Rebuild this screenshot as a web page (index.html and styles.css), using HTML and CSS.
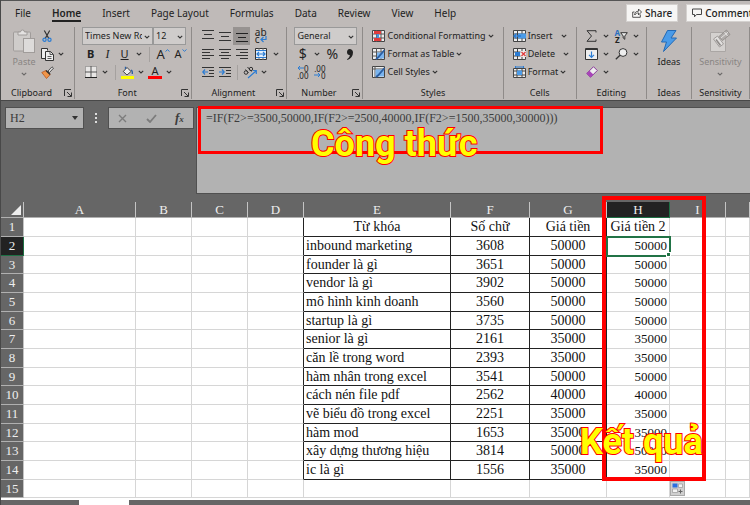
FILE: index.html
```
<!DOCTYPE html>
<html lang="vi">
<head>
<meta charset="utf-8">
<title>Excel</title>
<link rel="stylesheet" href="styles.css">
</head>
<body>
<svg class="defs" aria-hidden="true">
  <symbol id="chev" viewBox="0 0 6 4"><path d="M.8.8 3 3 5.200.8" fill="none" stroke="#333" stroke-width="1.1"/></symbol>
  <symbol id="launch" viewBox="0 0 8 8"><path d="M.5 7V.5H7M3 3l4 4M7.500 3.500v4h-4" fill="none" stroke="#333"/></symbol>
</svg>
<div class="app">
<header class="ribbon">
  <div class="topline">
    <nav class="tabs">
      <a href="#">File</a><a href="#" class="current">Home</a><a href="#">Insert</a><a href="#">Page Layout</a><a href="#">Formulas</a><a href="#">Data</a><a href="#">Review</a><a href="#">View</a><a href="#">Help</a>
    </nav>
    <div class="actions">
      <button class="action"><svg width="10" height="10" viewBox="0 0 10 10" fill="none" stroke="#444"><path d="M2.500 4H.7v5.300h7.600V6.500M2.700 7c0-2.500 1.300-3.800 3.800-3.800V1l3 3-3 3V4.900C5 4.900 3.700 5.500 2.700 7z" stroke-width=".9"/></svg>Share</button>
      <button class="action"><svg width="10" height="10" viewBox="0 0 10 10" fill="none" stroke="#444"><path d="M.5 1h9v5.500H4.500L2.500 8.800V6.500h-2z"/></svg>Comments</button>
    </div>
  </div>
  <div class="groups">
    <section class="group">
      <div class="body clip">
        <button class="tall off"><svg width="24" height="24" viewBox="0 0 24 24"><rect x="1.500" y="3" width="17" height="19" rx="1" fill="#cfccca" stroke="#a09c9a"/><path d="M6 6V3h2.500a2 2 0 0 1 4 0H15v3z" fill="#e4e2e1" stroke="#a09c9a"/><rect x="11.500" y="9.500" width="11" height="14" fill="#dddbda" stroke="#a09c9a"/></svg><span>Paste</span><svg class="chev" width="6" height="4"><use href="#chev"/></svg></button>
        <div class="stack">
          <div class="row"><button class="ic w14" aria-label="Cut"><svg width="10" height="12" viewBox="0 0 10 12" fill="none"><path d="M2.300.5 6.800 8.500M7.700.5 3.200 8.500" stroke="#333" stroke-width="1.200"/><circle cx="2.500" cy="9.800" r="1.600" stroke="#2b7cd3" stroke-width="1.200"/><circle cx="7.500" cy="9.800" r="1.600" stroke="#2b7cd3" stroke-width="1.200"/></svg></button></div>
          <div class="row"><button class="ic w14" aria-label="Copy"><svg width="13" height="13" viewBox="0 0 13 13" fill="#eee" stroke="#333"><path d="M4.500 10.500h-4V.5h6v2"/><path d="M4.500 3.500h5l3 3v6h-8z"/><path d="M9 3.500v3h3M6.500 8.500h4M6.500 10.500h4" fill="none" stroke-width=".8"/></svg></button><button class="ic w14" aria-label="Copy options"><svg class="chev" width="6" height="4"><use href="#chev"/></svg></button></div>
          <div class="row"><button class="ic w14" aria-label="Format painter"><svg width="13" height="13" viewBox="0 0 13 13"><path d="M7 5l4-4.200 1.500 1.400L8.500 6.500z" fill="#ddd" stroke="#333" stroke-width=".8"/><path d="M.8 6.500 5 4.500l4.200 4-3.700 4C4 10.500 2.500 8.500.8 6.500z" fill="#f0964a" stroke="#b9541b" stroke-width=".8"/><path d="M5 4.500l4.200 4" stroke="#333" stroke-width="1.500"/></svg></button></div>
        </div>
      </div>
      <div class="caption"><span>Clipboard</span><button class="launch" aria-label="Clipboard settings"><svg width="8" height="8"><use href="#launch"/></svg></button></div>
    </section>
    <section class="group">
      <div class="body font">
        <div class="row">
          <label class="pick name"><select aria-label="Font name"><option>Times New Roman</option></select><svg class="chev" width="6" height="4"><use href="#chev"/></svg></label>
          <label class="pick size"><select aria-label="Font size"><option>12</option></select><svg class="chev" width="6" height="4"><use href="#chev"/></svg></label>
        </div>
        <div class="row">
          <button class="ic w17 bold">B</button><button class="ic w17 italic">I</button><button class="ic w17 under">U</button><button class="ic w12" aria-label="Underline options"><svg class="chev" width="6" height="4"><use href="#chev"/></svg></button><i class="bar"></i>
          <button class="ic w18 grow">A<svg width="5" height="3" viewBox="0 0 5 3"><path d="M.5 2.500 2.500.7l2 1.800" fill="none" stroke="#2b7cd3"/></svg></button><button class="ic w17 shrink">A<svg width="5" height="3" viewBox="0 0 5 3"><path d="M.5.500 2.500 2.300l2-1.800" fill="none" stroke="#2b7cd3"/></svg></button>
        </div>
        <div class="row">
          <button class="ic w17" aria-label="Borders"><svg width="12" height="12" viewBox="0 0 12 12"><path d="M.5.5h11v11H.5z" fill="#e8e6e5" stroke="#777" stroke-dasharray="1 1"/><path d="M6 0v11M0 6h12" stroke="#555"/><path d="M0 11.500h12" stroke="#222"/></svg></button><button class="ic w12" aria-label="Border options"><svg class="chev" width="6" height="4"><use href="#chev"/></svg></button><i class="bar"></i>
          <button class="ic w14" aria-label="Fill colour"><svg width="13" height="13" viewBox="0 0 13 13"><path d="M6 1.500 10 5.500 6 9 2.300 5.500z" fill="#eee" stroke="#333" stroke-width=".9"/><path d="M4.500 3V.8M10 4c1.500.5 1.500 2.500 1.300 4" fill="none" stroke="#2b5fa3" stroke-width="1.300"/><path d="M0 10h13v3H0z" fill="#ff0"/></svg></button><button class="ic w14" aria-label="Fill options"><svg class="chev" width="6" height="4"><use href="#chev"/></svg></button>
          <button class="ic w14 ink">A</button><button class="ic w14" aria-label="Font colour options"><svg class="chev" width="6" height="4"><use href="#chev"/></svg></button>
        </div>
      </div>
      <div class="caption"><span>Font</span><button class="launch" aria-label="Font settings"><svg width="8" height="8"><use href="#launch"/></svg></button></div>
    </section>
    <section class="group">
      <div class="body align">
        <div class="row">
          <button class="ic w17" aria-label="Top align"><svg width="12" height="12" viewBox="0 0 12 12"><path d="M0 .500h12M2 4.500h8M0 8.500h12" stroke="#333"/></svg></button><button class="ic w17" aria-label="Middle align"><svg width="12" height="12" viewBox="0 0 12 12"><path d="M0 2.500h12M2 6.500h8M0 10.500h12" stroke="#333"/></svg></button><button class="ic w17 pressed" aria-label="Bottom align"><svg width="12" height="12" viewBox="0 0 12 12"><path d="M0 3.500h12M2 7.500h8M0 11.500h12" stroke="#222"/></svg></button>
          <button class="ic w21 wrap"><span>ab</span><span>c<svg width="7" height="7" viewBox="0 0 7 7"><path d="M6 0v3.500H1M3.500 1 1 3.500 3.500 6" fill="none" stroke="#2b7cd3" stroke-width="1.200"/></svg></span></button>
        </div>
        <div class="row">
          <button class="ic w17" aria-label="Align left"><svg width="12" height="12" viewBox="0 0 12 12"><path d="M0 1.500h12M0 4.500h8M0 7.500h12M0 10.500h8" stroke="#333"/></svg></button><button class="ic w17" aria-label="Centre"><svg width="12" height="12" viewBox="0 0 12 12"><path d="M0 1.500h12M2 4.500h8M0 7.500h12M2 10.500h8" stroke="#333"/></svg></button><button class="ic w17" aria-label="Align right"><svg width="12" height="12" viewBox="0 0 12 12"><path d="M0 1.500h12M4 4.500h8M0 7.500h12M4 10.500h8" stroke="#333"/></svg></button>
          <button class="ic w21" aria-label="Merge"><svg width="12" height="12" viewBox="0 0 12 12"><path d="M.5.5h11v11H.5z" fill="#eee" stroke="#333"/><path d="M4 0v12M8 0v12" stroke="#666"/><path d="M1 3h10v6H1z" fill="#e4f0fd"/><path d="M1 2.500h10M1 9.500h10" stroke="#2b7cd3" stroke-width="1.200"/><path d="M2 6h8M4 4 2 6l2 2M8 4l2 2-2 2" fill="none" stroke="#2b7cd3" stroke-width="1.200"/></svg></button><button class="ic w9" aria-label="Merge options"><svg class="chev" width="6" height="4"><use href="#chev"/></svg></button>
        </div>
        <div class="row">
          <button class="ic w17" aria-label="Decrease indent"><svg width="12" height="12" viewBox="0 0 12 12" fill="none"><path d="M0 1.500h12M7 4.500h5M7 7.500h5M0 10.500h12" stroke="#333"/><path d="M6 6H.8M3 3.500.8 6 3 8.500" stroke="#2b7cd3" stroke-width="1.200"/></svg></button><button class="ic w17" aria-label="Increase indent"><svg width="12" height="12" viewBox="0 0 12 12" fill="none"><path d="M0 1.500h12M7 4.500h5M7 7.500h5M0 10.500h12" stroke="#333"/><path d="M0 6h5.200M3 3.500 5.200 6 3 8.500" stroke="#2b7cd3" stroke-width="1.200"/></svg></button><i class="bar"></i>
          <button class="ic w17" aria-label="Orientation"><svg width="15" height="13" viewBox="0 0 15 13" fill="none"><g stroke="#333" stroke-width="1"><circle cx="3" cy="6.500" r="1.800"/><path d="M2.500 3.500l3 3.500M4.500 1l4 4.500"/><circle cx="8" cy="3" r="1.700"/></g><path d="M5 12l8-7M10 4.500h3.300V8" stroke="#2b7cd3" stroke-width="1.200"/></svg></button><button class="ic w9" aria-label="Orientation options"><svg class="chev" width="6" height="4"><use href="#chev"/></svg></button>
        </div>
      </div>
      <div class="caption"><span>Alignment</span><button class="launch" aria-label="Alignment settings"><svg width="8" height="8"><use href="#launch"/></svg></button></div>
    </section>
    <section class="group">
      <div class="body num">
        <div class="row"><label class="pick format"><select aria-label="Number format"><option>General</option></select><svg class="chev" width="6" height="4"><use href="#chev"/></svg></label></div>
        <div class="row"><button class="ic w17 sign">$</button><button class="ic w12" aria-label="Currency options"><svg class="chev" width="6" height="4"><use href="#chev"/></svg></button><button class="ic w18 sign">%</button><button class="ic w17" aria-label="Comma style"><svg width="8" height="11" viewBox="0 0 8 11"><path d="M3.500 0C5.500 0 7 1.300 7 3.500 7 7 5 9.500 1.500 11L1 10.300C3 9 3.800 7.500 3.800 6 2 6.200 1 4.800 1 3.200 1 1.300 2 0 3.500 0z" fill="#222"/></svg></button></div>
        <div class="row"><button class="ic w17 dec"><span><svg width="7" height="6" viewBox="0 0 7 6"><path d="M7 3H1M3 1 1 3l2 2" fill="none" stroke="#2b7cd3"/></svg>0</span><span>.00</span></button><button class="ic w17 dec"><span>.00</span><span><svg width="7" height="6" viewBox="0 0 7 6"><path d="M0 3h6M4 1l2 2-2 2" fill="none" stroke="#2b7cd3"/></svg>0</span></button></div>
      </div>
      <div class="caption"><span>Number</span><button class="launch" aria-label="Number settings"><svg width="8" height="8"><use href="#launch"/></svg></button></div>
    </section>
    <section class="group">
      <div class="body styles">
        <button class="row item"><svg width="13" height="12" viewBox="0 0 13 12"><path d="M.5.5h12v11H.5z" fill="#eee" stroke="#444"/><path d="M0 4h13M0 8h13M4.500 0v12M9 0v12" stroke="#555"/><path d="M2 1h7v3H2zM2 8h7v3H2z" fill="#e03c3c"/><path d="M4.500 4H7v4H4.500z" fill="#4a90d9"/></svg>Conditional Formatting<svg class="chev" width="6" height="4"><use href="#chev"/></svg></button>
        <button class="row item"><svg width="13" height="12" viewBox="0 0 13 12"><path d="M.5.5h12v11H.5z" fill="#eee" stroke="#444"/><path d="M0 4h13M0 8h13M4.500 0v12M9 0v12" stroke="#555"/><path d="M5 4.500h7v6H5z" fill="#7ab4ee"/><path d="M12.500 2 6 9.500 4 11" stroke="#2b5fa3" stroke-width="1.800"/></svg>Format as Table<svg class="chev" width="6" height="4"><use href="#chev"/></svg></button>
        <button class="row item"><svg width="13" height="12" viewBox="0 0 13 12"><path d="M.5.5h12v11H.5z" fill="#eee" stroke="#444"/><path d="M0 3h13M3 0v12" stroke="#555"/><path d="M3.500 3.500h8.500v7H3.500z" fill="#7ab4ee"/><path d="M12.500 2 6 9.500 4 11" stroke="#2b5fa3" stroke-width="1.800"/></svg>Cell Styles<svg class="chev" width="6" height="4"><use href="#chev"/></svg></button>
      </div>
      <div class="caption"><span>Styles</span></div>
    </section>
    <section class="group">
      <div class="body cells">
        <button class="row item wide"><svg width="13" height="12" viewBox="0 0 13 12"><path d="M.5.5h12v11H.5z" fill="#eee" stroke="#444"/><path d="M0 4h13M0 8h13M4.500 0v12M9 0v12" stroke="#444"/><path d="M5 3.500h8v5H5z" fill="#4a9be8"/><path d="M8 6H1M3.500 3.500 1 6l2.500 2.500" fill="none" stroke="#2b7cd3" stroke-width="1.300"/></svg>Insert<svg class="chev" width="6" height="4"><use href="#chev"/></svg></button>
        <button class="row item wide"><svg width="13" height="12" viewBox="0 0 13 12"><path d="M.5.5h12v11H.5z" fill="#eee" stroke="#444"/><path d="M0 4h13M0 8h13M4.500 0v12M9 0v12" stroke="#444"/><path d="M2 4h5v4H2z" fill="#2b7cd3"/><path d="M7.500 3h5.500v6H7.500z" fill="#eee"/><path d="M8.500 4l4 4M12.500 4l-4 4" stroke="#e03c3c" stroke-width="1.300"/></svg>Delete<svg class="chev" width="6" height="4"><use href="#chev"/></svg></button>
        <button class="row item"><svg width="13" height="12" viewBox="0 0 13 12"><path d="M.5 2.500h12v9H.5z" fill="#eee" stroke="#444"/><path d="M0 5h13M0 9h13M4 2v10M9 2v10" stroke="#444"/><path d="M4 4.500h5v4.500H4z" fill="#4a9be8"/><path d="M2.500 1h8M2.500 0v2M10.500 0v2" stroke="#2b7cd3"/></svg>Format<svg class="chev" width="6" height="4"><use href="#chev"/></svg></button>
      </div>
      <div class="caption"><span>Cells</span></div>
    </section>
    <section class="group">
      <div class="body edit">
        <div class="row"><button class="ic w14" aria-label="Sum"><svg width="11" height="12" viewBox="0 0 11 12"><path d="M10 2.500V.7H1L5.500 6 1 11.300h9V9.500" fill="none" stroke="#333"/></svg></button><button class="ic w14" aria-label="Sum options"><svg class="chev" width="6" height="4"><use href="#chev"/></svg></button><button class="ic w17 sort"><span><b>A</b><b>Z</b></span><svg width="8" height="8" viewBox="0 0 8 8"><path d="M.7.7h6.600L4.800 4v3.300L3.200 6V4z" fill="#eee" stroke="#333"/></svg></button><button class="ic w12" aria-label="Sort options"><svg class="chev" width="6" height="4"><use href="#chev"/></svg></button></div>
        <div class="row"><button class="ic w14" aria-label="Fill"><svg width="13" height="12" viewBox="0 0 13 12"><path d="M.5.5h12v11H.5z" fill="#eee" stroke="#333"/><path d="M0 1.500h13" stroke="#333"/><path d="M6.500 3.500V9M4 6.800l2.500 2.500L9 6.800" fill="none" stroke="#2b7cd3" stroke-width="1.200"/></svg></button><button class="ic w14" aria-label="Fill options"><svg class="chev" width="6" height="4"><use href="#chev"/></svg></button><button class="ic w17" aria-label="Find"><svg width="13" height="12" viewBox="0 0 13 12"><circle cx="8" cy="4.500" r="3.900" fill="#eee" stroke="#333"/><path d="M5 7.300.8 11.300" stroke="#333" stroke-width="1.300"/></svg></button><button class="ic w12" aria-label="Find options"><svg class="chev" width="6" height="4"><use href="#chev"/></svg></button></div>
        <div class="row"><button class="ic w14" aria-label="Clear"><svg width="12" height="12" viewBox="0 0 12 12"><path d="M7.500.7 11.300 4.500 4.500 11.300.7 7.500z" fill="#eee" stroke="#8a3a9a"/><path d="M3.500 4.700.7 7.500l3.800 3.800 2.800-2.800z" fill="#a844b8"/></svg></button><button class="ic w14" aria-label="Clear options"><svg class="chev" width="6" height="4"><use href="#chev"/></svg></button></div>
      </div>
      <div class="caption"><span>Editing</span></div>
    </section>
    <section class="group">
      <div class="body single">
        <button class="tall"><svg width="18" height="24" viewBox="0 0 18 24"><path d="M7.500 1.500H16L11 9h5.500L3.500 22.500 6.500 13H1.500z" fill="#4a9be8" stroke="#2369b4"/></svg><span>Ideas</span></button>
      </div>
      <div class="caption"><span>Ideas</span></div>
    </section>
    <section class="group">
      <div class="body single">
        <button class="tall off"><svg width="22" height="24" viewBox="0 0 22 24"><path d="M1.500 3.500h15v19h-15z" fill="#d4d1cf" stroke="#aaa6a4"/><path d="M4.500 10 8.500 7l6 8-4 3z" fill="#e2e0df" stroke="#a09c9a"/><path d="M7 10.500l4.500 6" stroke="#8f8b89" stroke-width="1.500"/><path d="M10 7.500 17.500 1l3.500 4.500-7.500 6z" fill="#b0acaa" stroke="#96928f"/><path d="M12 9 19 3.200M15.500 3l3 4" stroke="#e4e2e1"/></svg><span>Sensitivity</span><svg class="chev" width="6" height="4"><use href="#chev"/></svg></button>
      </div>
      <div class="caption"><span>Sensitivity</span></div>
    </section>
  </div>
</header>

<div class="formulabar">
  <div class="namebox"><input aria-label="Name box" value="H2"><svg width="6" height="4" viewBox="0 0 6 4"><path d="M0 0h6L3 4z" fill="#333"/></svg></div>
  <svg class="dots" width="2" height="10" viewBox="0 0 2 10"><path d="M0 0h2v2H0zM0 4h2v2H0zM0 8h2v2H0z" fill="#ddd"/></svg>
  <div class="fxbox">
    <button aria-label="Cancel"><svg width="9" height="9" viewBox="0 0 9 9"><path d="M1 1l7 7M8 1 1 8" stroke="#7c7c7c" stroke-width="1.400"/></svg></button>
    <button aria-label="Enter"><svg width="11" height="9" viewBox="0 0 11 9"><path d="M1 5l3 3 6-7" fill="none" stroke="#7c7c7c" stroke-width="1.800"/></svg></button>
    <button class="fx">f<small>x</small></button>
  </div>
  <div class="formula">
    <input aria-label="Formula" value="=IF(F2&gt;=3500,50000,IF(F2&gt;=2500,40000,IF(F2&gt;=1500,35000,30000)))">
    <div class="mark markformula"></div>
    <div class="note noteformula">Công thức</div>
  </div>
</div>

<main class="sheet">
  <table>
    <colgroup><col class="c-row"><col class="c-a"><col class="c-s"><col class="c-s"><col class="c-s"><col class="c-e"><col class="c-f"><col class="c-g"><col class="c-h"><col class="c-s"><col></colgroup>
    <thead><tr><th class="corner"><svg width="10" height="10" viewBox="0 0 10 10"><path d="M10 0v10H0z" fill="#eee"/></svg></th><th>A</th><th>B</th><th>C</th><th>D</th><th>E</th><th>F</th><th>G</th><th class="on">H</th><th>I</th><th></th></tr></thead>
    <tbody>
      <tr class="titles"><th>1</th><td></td><td></td><td></td><td></td><td class="k">Từ khóa</td><td class="n">Số chữ</td><td class="n">Giá tiền</td><td class="r">Giá tiền 2</td><td></td><td></td></tr>
      <tr><th class="on">2</th><td></td><td></td><td></td><td></td><td class="k">inbound marketing</td><td class="n">3608</td><td class="n">50000</td><td class="r active">50000<i class="handle"></i></td><td></td><td></td></tr>
      <tr><th>3</th><td></td><td></td><td></td><td></td><td class="k">founder là gì</td><td class="n">3651</td><td class="n">50000</td><td class="r">50000</td><td></td><td></td></tr>
      <tr><th>4</th><td></td><td></td><td></td><td></td><td class="k">vendor là gì</td><td class="n">3902</td><td class="n">50000</td><td class="r">50000</td><td></td><td></td></tr>
      <tr><th>5</th><td></td><td></td><td></td><td></td><td class="k">mô hình kinh doanh</td><td class="n">3560</td><td class="n">50000</td><td class="r">50000</td><td></td><td></td></tr>
      <tr><th>6</th><td></td><td></td><td></td><td></td><td class="k">startup là gì</td><td class="n">3735</td><td class="n">50000</td><td class="r">50000</td><td></td><td></td></tr>
      <tr><th>7</th><td></td><td></td><td></td><td></td><td class="k">senior là gì</td><td class="n">2161</td><td class="n">35000</td><td class="r">35000</td><td></td><td></td></tr>
      <tr><th>8</th><td></td><td></td><td></td><td></td><td class="k">căn lề trong word</td><td class="n">2393</td><td class="n">35000</td><td class="r">35000</td><td></td><td></td></tr>
      <tr><th>9</th><td></td><td></td><td></td><td></td><td class="k">hàm nhân trong excel</td><td class="n">3541</td><td class="n">50000</td><td class="r">50000</td><td></td><td></td></tr>
      <tr><th>10</th><td></td><td></td><td></td><td></td><td class="k">cách nén file pdf</td><td class="n">2562</td><td class="n">40000</td><td class="r">40000</td><td></td><td></td></tr>
      <tr><th>11</th><td></td><td></td><td></td><td></td><td class="k">vẽ biểu đồ trong excel</td><td class="n">2251</td><td class="n">35000</td><td class="r">35000</td><td></td><td></td></tr>
      <tr><th>12</th><td></td><td></td><td></td><td></td><td class="k">hàm mod</td><td class="n">1653</td><td class="n">35000</td><td class="r">35000</td><td></td><td></td></tr>
      <tr><th>13</th><td></td><td></td><td></td><td></td><td class="k">xây dựng thương hiệu</td><td class="n">3814</td><td class="n">50000</td><td class="r">50000</td><td></td><td></td></tr>
      <tr><th>14</th><td></td><td></td><td></td><td></td><td class="k">ic là gì</td><td class="n">1556</td><td class="n">35000</td><td class="r">35000</td><td></td><td></td></tr>
      <tr><th>15</th><td></td><td></td><td></td><td></td><td></td><td></td><td></td><td></td><td></td><td></td></tr>
    </tbody>
  </table>
  <div class="mark markresult"></div>
  <div class="note noteresult">Kết quả</div>
  <button class="fill" aria-label="Auto fill options"><svg width="11" height="11" viewBox="0 0 11 11"><path d="M.5.500h5v4h-5z" fill="#2b6fe0"/><path d="M6.500 1h4v3.500h-4zM.5 6h5v3.500h-5z" fill="#f4f4f4" stroke="#999" stroke-width=".7"/><path d="M8.500 6.500v4M6.500 8.500h4" stroke="#666"/></svg></button>
</main>
<footer class="sheettabs"><span class="tab"></span></footer>
</div>
</body>
</html>
```
FILE: styles.css
```
* { box-sizing: border-box; }
body { margin: 0; background: #fff; font-family: "Noto Sans", "Open Sans", sans-serif; overflow: hidden; }
button, input, select { font: inherit; color: inherit; border: 0; padding: 0; margin: 0; background: none; border-radius: 0; }
svg { display: block; flex: none; }
a { color: inherit; text-decoration: none; }
.defs { position: absolute; width: 0; height: 0; }
.app { border-left: 1px solid #484848; }

/* Ribbon */
.ribbon { background: #bfbab8; color: #222; border-top: 1px solid #555; border-bottom: 1px solid #484848; font-size: 9px; line-height: 14px; }
.topline { display: flex; justify-content: space-between; height: 26px; }
.tabs { display: flex; gap: 21px; padding-left: 14px; font-size: 10px; line-height: 24px; }
.tabs a { height: 21px; }
.tabs .current { font-weight: 600; border-bottom: 2px solid #222; }
.actions { display: flex; gap: 8px; padding-top: 3px; width: 124px; overflow: hidden; font-weight: 500; }
.action { display: flex; flex: none; align-items: center; gap: 3px; height: 18px; padding: 0 5px; background: #f6f5f4; border: 1px solid #d4d1cf; white-space: nowrap; font-size: 10px; }
.groups { display: grid; grid-template-columns: 74fr 117fr 95fr 76fr 140fr 73fr 70fr 45fr 58fr; padding-bottom: 1px; }
.group { display: flex; flex-direction: column; min-width: 0; border-right: 1px solid #8f8b89; }
.body { height: 56px; }
.row { display: flex; align-items: center; height: 18px; white-space: nowrap; }
.caption { display: flex; align-items: center; justify-content: center; position: relative; height: 16px; padding-right: 12px; padding-top: 4px; }
.caption:not(:has(.launch)) { padding-right: 0; }
.launch { position: absolute; right: 2px; top: 6px; }
.ic { display: flex; align-items: center; justify-content: center; height: 18px; flex: none; }
.w9 { width: 9px; }
.w12 { width: 12px; }
.w14 { width: 14px; }
.w17 { width: 17px; }
.w18 { width: 18px; }
.w21 { width: 21px; }
.bar { width: 1px; height: 15px; margin: 0 4px; background: #a5a19f; }
.pick { position: relative; height: 18px; border: 1px solid #999; background: #cfcccb; }
.pick select { width: 100%; height: 16px; padding-left: 2px; appearance: none; line-height: 16px; }
.pick .chev { position: absolute; right: 2px; top: 7px; }
.tall { display: flex; flex-direction: column; align-items: center; padding-top: 2px; }
.tall span { margin-top: 2px; }
.tall .chev { margin-top: 3px; }
.off { color: #898583; }
.off .chev { opacity: .6; }
.clip { display: flex; padding-left: 11px; gap: 4px; }
.font { padding-left: 7px; }
.name { width: 71px; padding-right: 10px; }
.size { width: 33px; }
.bold { font-weight: 700; font-size: 11px; }
.italic { font: italic 12px "Liberation Serif", serif; }
.under { text-decoration: underline; font-size: 11px; }
.grow { font-size: 13px; }
.shrink { font-size: 11px; }
.grow svg, .shrink svg { align-self: flex-start; margin-top: 4px; }
.ink { height: 14px; border-bottom: 3px solid #f00; font-size: 11px; }
.align { padding-left: 7px; }
.pressed { background: #979391; }
.wrap, .dec { flex-direction: column; font-size: 10px; line-height: 7px; }
.wrap span, .dec span { display: flex; }
.dec { font-size: 8px; }
.num { padding-left: 7px; }
.format { width: 63px; }
.sign { font-size: 14px; }
.styles { padding-left: 9px; }
.cells { padding-left: 9px; }
.item { gap: 2px; }
.wide .chev { margin-left: 6px; }
.edit { padding-left: 8px; }
.sort span { display: flex; flex-direction: column; font-size: 8px; line-height: 7px; }
.sort b:first-child { color: #2b6fc0; }
.single { display: flex; justify-content: center; }

/* Formula bar */
.formulabar { display: flex; align-items: flex-start; height: 101px; padding: 6px 0 0 4px; background: #666; font-family: "Liberation Serif", serif; color: #3c3c3c; }
.namebox { display: flex; align-items: center; width: 79px; height: 22px; padding: 0 5px 0 4px; background: #b2b2b2; border: 1px solid #505050; font-size: 12px; }
.namebox input { flex: 1; min-width: 0; }
.dots { margin: 6px 11px 0; }
.fxbox { display: flex; align-items: center; justify-content: space-around; width: 86px; height: 22px; background: #b2b2b2; border: 1px solid #505050; }
.fx { font-size: 13px; font-style: italic; font-weight: 700; line-height: 16px; }
.fx small { font-size: 9px; }
.formula { position: relative; flex: 1; height: 87px; margin-left: 2px; background: #b2b2b2; border: 1px solid #505050; border-right: 0; font-size: 12px; }
.formula input { display: block; width: 100%; height: 21px; padding-left: 9px; }

/* Sheet */
.sheet { position: relative; font-family: "Liberation Serif", serif; }
table { width: 100%; table-layout: fixed; border-collapse: separate; border-spacing: 0; }
.c-row { width: 23px; }
.c-a { width: 112px; }
.c-s { width: 56px; }
.c-e { width: 147px; }
.c-f { width: 79px; }
.c-g { width: 77px; }
.c-h { width: 63px; }
th, td { padding: 0; white-space: nowrap; line-height: 16px; }
th { font-weight: 400; font-size: 13px; color: #eee; background: #666; border-right: 1px solid #c4c4c4; border-bottom: 1px solid #b0b0b0; }
thead th { height: 16px; line-height: 15px; }
.corner svg { margin-left: 10px; }
th.on { background: #222; border-color: #1d7044; }
td { height: 19px; border-right: 1px solid #d6d6d6; border-bottom: 1px solid #d6d6d6; font-size: 14px; color: #111; }
tbody tr:nth-child(3n) td { height: 18px; }
td.k, td.n { border-color: #222; }
td.k { padding-left: 2px; }
td:has(+ .k) { border-right-color: #222; }
td.n { text-align: center; }
td.r { padding-right: 2px; text-align: right; font-size: 13px; }
.titles td.k, .titles td.r { text-align: center; padding: 0; font-size: 14px; }
td.active { position: relative; outline: 2px solid #217346; outline-offset: -1px; }
.handle { position: absolute; right: -2px; bottom: -2px; width: 5px; height: 5px; background: #217346; border: 1px solid #fff; }
.sheettabs { display: flex; height: 8px; margin-top: 2px; padding-left: 78px; background: #666; }
.tab { width: 50px; background: #fff; }

/* Annotations */
.mark { position: absolute; border: 3px solid #f00; pointer-events: none; }
.markformula { left: 1px; top: -2px; width: 405px; height: 48px; }
.markresult { left: 601px; top: -6px; width: 104px; height: 285px; border-width: 4px; }
.note { position: absolute; color: #ff0; font: 700 36px/44px Roboto, sans-serif; white-space: nowrap; -webkit-text-stroke: 2px #f00; paint-order: stroke fill; }
.noteformula { left: 114px; top: 14px; }
.noteresult { left: 579px; top: 218px; }
.fill { position: absolute; left: 669px; top: 279px; width: 15px; height: 15px; padding: 1px; background: #d0d0d0; border: 1px solid #aaa; }
```
